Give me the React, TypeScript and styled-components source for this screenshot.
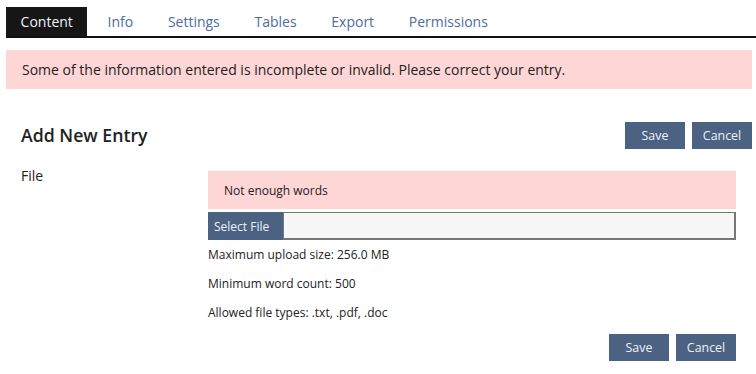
import styled, { createGlobalStyle } from 'styled-components';

const GlobalStyle = createGlobalStyle`
  body { margin: 0; background: #fff; font-family: 'Open Sans', 'Noto Sans', sans-serif; color: #222; }
  * { box-sizing: border-box; }
`;

const Page = styled.div`
  padding: 7px 0 0 6px;
  width: 756px;
`;

const TabBar = styled.nav`
  display: flex;
  gap: 5.5px;
  border-bottom: 2px solid #111;
`;

const Tab = styled.a<{ $active?: boolean }>`
  display: block;
  height: 29px;
  padding: 0 14.6px;
  line-height: 30px;
  font-size: 14px;
  text-decoration: none;
  color: ${(p) => (p.$active ? '#eef2f8' : '#4d6d9a')};
  background: ${(p) => (p.$active ? '#161616' : 'transparent')};
`;

const Alert = styled.div<{ $compact?: boolean }>`
  background: #ffd6d6;
  color: #222;
  display: flex;
  align-items: center;
  height: ${(p) => (p.$compact ? '38px' : '39px')};
  padding: 0 16px;
  font-size: ${(p) => (p.$compact ? '12px' : '14px')};
`;

const Body = styled.div`
  padding-right: 4px;
`;

const TopAlert = styled(Alert)`
  margin-top: 12px;
`;

const Header = styled.div`
  display: flex;
  align-items: center;
  justify-content: space-between;
  margin-top: 33px;
  padding-left: 15px;
`;

const Title = styled.h2`
  margin: 0 0 2px;
  font-size: 17.7px;
  font-weight: 600;
  color: #222;
`;

const Actions = styled.div`
  display: flex;
  gap: 7px;
`;

const Button = styled.button`
  width: 60px;
  height: 27px;
  border: none;
  padding: 0;
  background: #4b6283;
  color: #eef2f8;
  font-family: inherit;
  font-size: 12.4px;
  cursor: pointer;
`;

const FormRow = styled.div`
  display: grid;
  grid-template-columns: 187px 528px;
  margin-top: 15px;
  padding-left: 15px;
`;

const Label = styled.div`
  font-size: 14px;
  padding-top: 2px;
`;

const Field = styled.div`
  display: flex;
  flex-direction: column;
  padding-top: 7px;
`;

const FileInput = styled.div`
  display: flex;
  height: 28px;
  margin-top: 3px;
`;

const SelectButton = styled.button`
  width: 75px;
  border: none;
  padding: 0 0 0 6px;
  text-align: left;
  background: #4b6283;
  color: #eef2f8;
  font-family: inherit;
  font-size: 12px;
`;

const FileBox = styled.div`
  flex: 1;
  background: #f7f7f7;
  border: 1px solid #777;
  border-right-width: 2px;
  border-bottom-width: 2px;
`;

const Help = styled.div`
  font-size: 12px;
  line-height: 29px;
`;

const Footer = styled.div`
  display: flex;
  justify-content: flex-end;
  gap: 7px;
  margin-top: 7px;
`;

const tabs = ['Content', 'Info', 'Settings', 'Tables', 'Export', 'Permissions'];

export default function App() {
  return (
    <Page>
      <GlobalStyle />
      <TabBar>
        {tabs.map((t, i) => (
          <Tab key={t} $active={i === 0} href="#">
            {t}
          </Tab>
        ))}
      </TabBar>
      <Body>
        <TopAlert>Some of the information entered is incomplete or invalid. Please correct your entry.</TopAlert>
        <Header>
          <Title>Add New Entry</Title>
          <Actions>
            <Button>Save</Button>
            <Button>Cancel</Button>
          </Actions>
        </Header>
        <FormRow>
          <Label>File</Label>
          <Field>
            <Alert $compact>Not enough words</Alert>
            <FileInput>
              <SelectButton>Select File</SelectButton>
              <FileBox />
            </FileInput>
            <div>
              <Help>Maximum upload size: 256.0 MB</Help>
              <Help>Minimum word count: 500</Help>
              <Help>Allowed file types: .txt, .pdf, .doc</Help>
            </div>
            <Footer>
              <Button>Save</Button>
              <Button>Cancel</Button>
            </Footer>
          </Field>
        </FormRow>
      </Body>
    </Page>
  );
}
